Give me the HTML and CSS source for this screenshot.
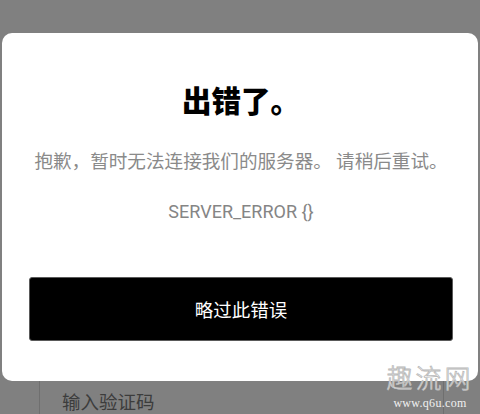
FILE: index.html
```html
<!DOCTYPE html>
<html lang="zh-CN">
<head>
<meta charset="utf-8">
<link rel="stylesheet" href="styles.css">
</head>
<body>
<div class="screen">
  <div class="dialog">
    <h1 class="title">出错了。</h1>
    <p class="message">抱歉，暂时无法连接我们的服务器。 请稍后重试。</p>
    <p class="code">SERVER_ERROR {}</p>
    <button class="dismiss">略过此错误</button>
  </div>
  <div class="field">
    <span class="field-label">输入验证码</span>
  </div>
  <div class="watermark">
    <span class="wm-name">趣流网</span>
    <span class="wm-url">www.q6u.com</span>
  </div>
</div>
</body>
</html>
```
FILE: styles.css
```css
* { box-sizing: border-box; }
html, body {
  margin: 0;
  padding: 0;
  background: #808080;
  width: 480px;
  height: 414px;
  overflow: hidden;
  font-family: "Noto Sans CJK SC", "Noto Sans", sans-serif;
}
.screen {
  position: relative;
  width: 480px;
  height: 414px;
  padding-top: 33px;
}
.dialog {
  margin: 0 2px;
  background: #ffffff;
  border-radius: 10px;
  padding: 46px 25px 40px 27px;
  display: flex;
  flex-direction: column;
  align-items: center;
}
.title {
  margin: 0;
  font-size: 29.5px;
  font-weight: 900;
  line-height: 40px;
  color: #000;
}
.message {
  margin: 27px 0 0;
  font-size: 18.6px;
  line-height: 28px;
  color: #8a8a8a;
  white-space: nowrap;
}
.code {
  margin: 26px 0 0;
  font-family: Roboto, "Noto Sans", sans-serif;
  font-size: 18px;
  line-height: 24px;
  color: #858585;
}
.dismiss {
  margin-top: 53px;
  width: 100%;
  height: 64px;
  background: #000;
  border: 1px solid #5a5a5a;
  border-radius: 3px;
  color: #fff;
  font-family: "Noto Sans CJK SC", sans-serif;
  font-size: 18.5px;
  padding: 0;
}
.field {
  margin: 0 36px 0 39px;
  height: 40px;
  border-left: 1px solid #6f6f6f;
  border-right: 1px solid #6f6f6f;
  padding: 6px 0 0 22px;
}
.field-label {
  font-size: 18.5px;
  line-height: 28px;
  color: #3c3c3c;
}
.watermark {
  position: absolute;
  left: 384px;
  top: 362px;
  width: 92px;
  display: flex;
  flex-direction: column;
  align-items: center;
}
.wm-name {
  font-family: "Noto Sans CJK SC", sans-serif;
  font-size: 26px;
  line-height: 30px;
  letter-spacing: 3px;
  font-weight: 300;
  color: rgba(255,255,255,0.92);
  -webkit-text-stroke: 0.8px #b8b8b8;
}
.wm-url {
  margin-top: 5px;
  font-family: "Liberation Serif", serif;
  font-size: 12px;
  line-height: 12px;
  color: #f0f0f0;
  letter-spacing: 0.3px;
}
```
